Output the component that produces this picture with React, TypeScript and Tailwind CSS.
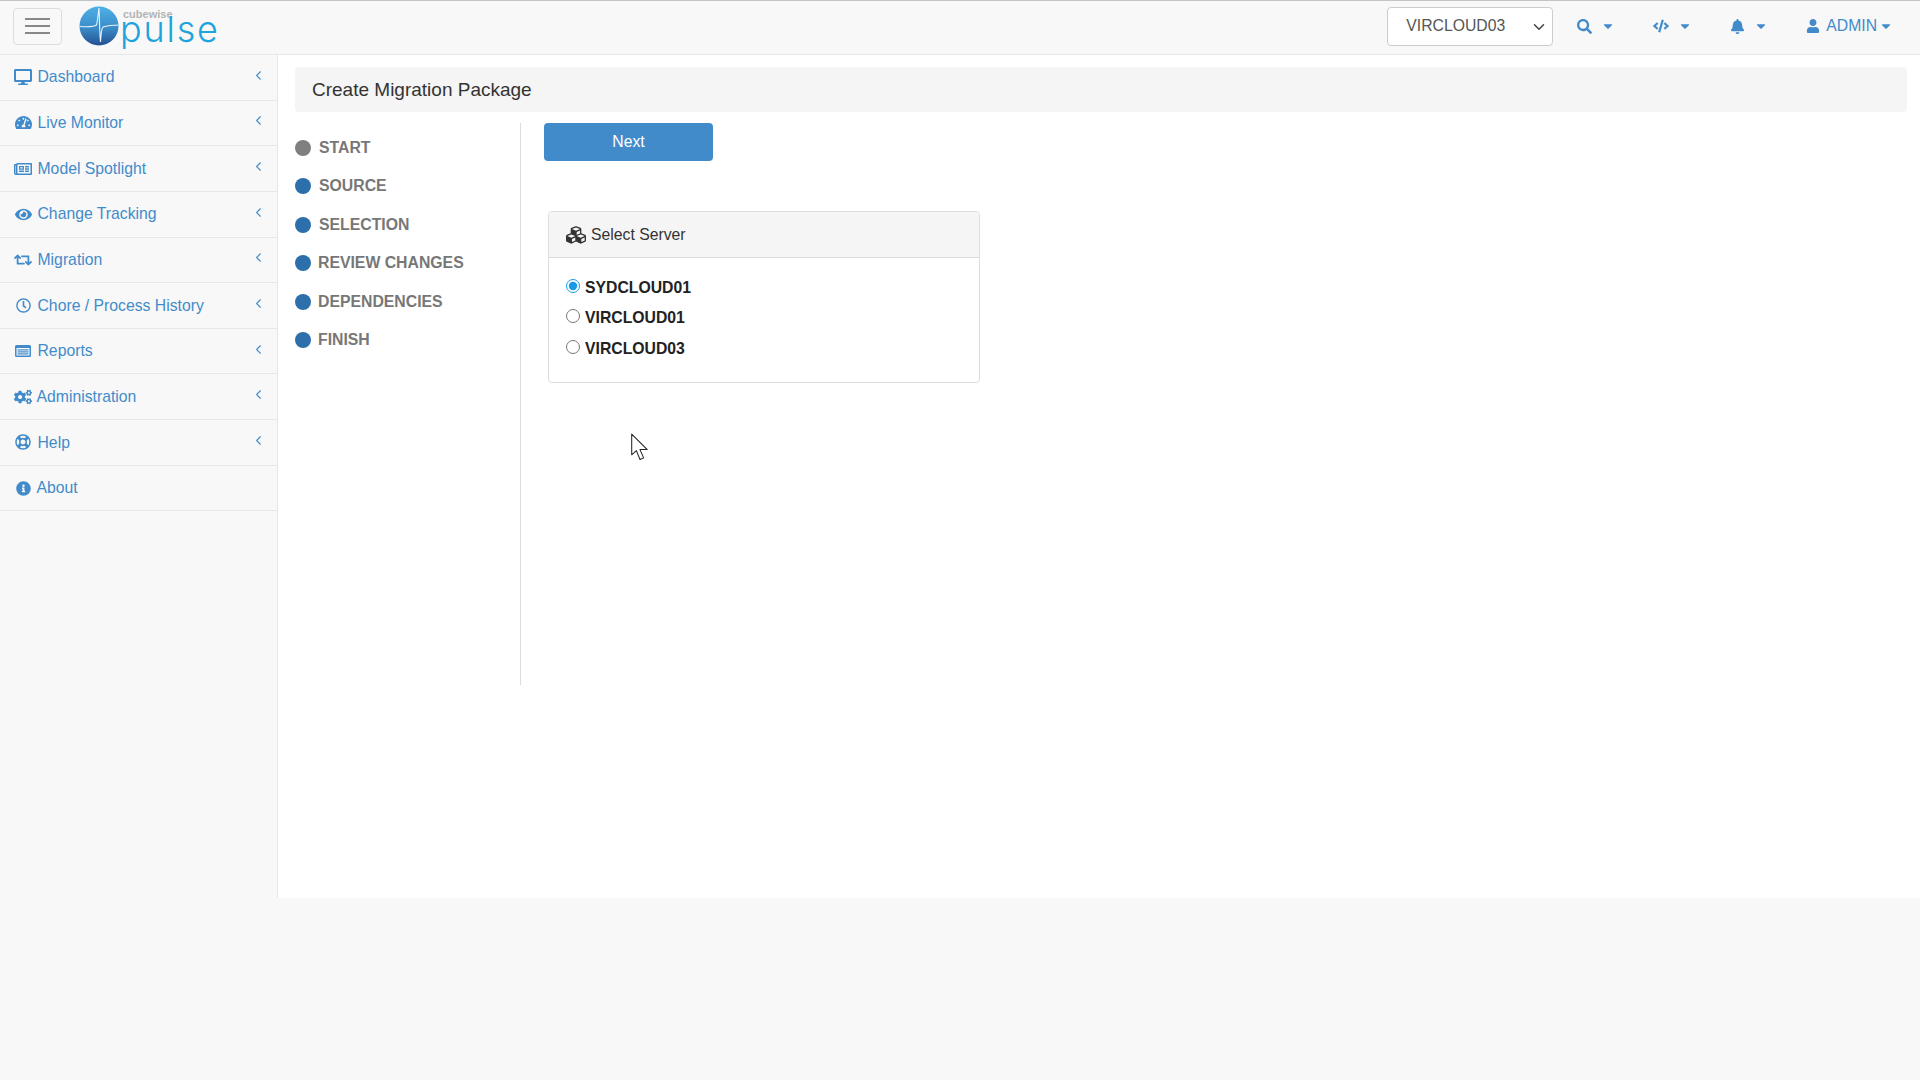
import React from "react";
import { FaDesktop, FaTachometerAlt, FaRegNewspaper, FaEye, FaRetweet, FaRegClock, FaCogs, FaRegLifeRing, FaInfoCircle, FaCubes, FaSearch, FaCode, FaBell, FaUser, FaCaretDown } from "react-icons/fa";
import { ChevronLeft, ChevronDown } from "lucide-react";

function ListAlt({ size }: { size: number }) {
  return (
    <svg width={size} height={size} viewBox="0 0 16 16" fill="currentColor">
      <path d="M1.5 2h13A1.5 1.5 0 0 1 16 3.5v9a1.5 1.5 0 0 1-1.5 1.5h-13A1.5 1.5 0 0 1 0 12.500v-9A1.500 1.500 0 0 1 1.500 2zm0 3v7.500h13V5z" fillRule="evenodd" />
      <rect x="2.500" y="6.300" width="11" height="1.200" />
      <rect x="2.500" y="8.300" width="11" height="1.200" />
      <rect x="2.500" y="10.300" width="11" height="1.200" />
    </svg>
  );
}

const menu: { label: string; Icon: React.ComponentType<any>; w: number; gap: number; chev: boolean }[] = [
  { label: "Dashboard", Icon: FaDesktop, w: 18, gap: 0, chev: true },
  { label: "Live Monitor", Icon: FaTachometerAlt, w: 17, gap: 0, chev: true },
  { label: "Model Spotlight", Icon: FaRegNewspaper, w: 18, gap: 0, chev: true },
  { label: "Change Tracking", Icon: FaEye, w: 17, gap: 0, chev: true },
  { label: "Migration", Icon: FaRetweet, w: 18, gap: 0, chev: true },
  { label: "Chore / Process History", Icon: FaRegClock, w: 15, gap: 0, chev: true },
  { label: "Reports", Icon: ListAlt, w: 16, gap: 0, chev: true },
  { label: "Administration", Icon: FaCogs, w: 18, gap: -1, chev: true },
  { label: "Help", Icon: FaRegLifeRing, w: 16, gap: 0, chev: true },
  { label: "About", Icon: FaInfoCircle, w: 15, gap: -1, chev: false },
];

const steps = [
  { label: "START", color: "bg-[#808080]", gap: "gap-[8px]" },
  { label: "SOURCE", color: "bg-[#2c6fab]", gap: "gap-[8px]" },
  { label: "SELECTION", color: "bg-[#2c6fab]", gap: "gap-[8px]" },
  { label: "REVIEW CHANGES", color: "bg-[#2c6fab]", gap: "gap-[7px]" },
  { label: "DEPENDENCIES", color: "bg-[#2c6fab]", gap: "gap-[7px]" },
  { label: "FINISH", color: "bg-[#2c6fab]", gap: "gap-[7px]" },
];

const servers = ["SYDCLOUD01", "VIRCLOUD01", "VIRCLOUD03"];

function Logo() {
  return (
    <div className="relative ml-[17px] h-[46px] w-[160px]">
      <svg viewBox="0 0 40 40" className="absolute left-0 top-[1px] h-[40px] w-[40px]">
        <defs>
          <linearGradient id="lg" x1="0" y1="0" x2="0" y2="1">
            <stop offset="0" stopColor="#4fb0e6" />
            <stop offset="0.55" stopColor="#3a8cc8" />
            <stop offset="1" stopColor="#234f92" />
          </linearGradient>
        </defs>
        <circle cx="20" cy="20" r="19.5" fill="url(#lg)" />
        <path d="M1 20.5 C10 21 15 21 17.5 19 C18.5 16 19 8 20 2 C20.5 10 20.5 26 21.5 36 C22 28 22.5 22 24 21 C28 19.5 34 19.5 39 19" fill="none" stroke="#e8f3fb" strokeWidth="1.1" />
      </svg>
      <span className="absolute left-[44px] top-[4px] text-[11px] leading-[11px] font-bold text-[#b4b4b4]">cubewise</span>
      <span className="absolute left-[41px] top-[16px] text-[36px] leading-[16px] font-light tracking-[1.8px] text-[#1fa3dc] font-['Inter',sans-serif]">pulse</span>
    </div>
  );
}

function NavIcon({ Icon, className, size }: { Icon: React.ComponentType<any>; className?: string; size: number }) {
  return (
    <span className={`flex items-center gap-[9px] ${className ?? ""}`}>
      <Icon size={size} />
      <FaCaretDown size={14} />
    </span>
  );
}

export default function App() {
  return (
    <div className="flex h-[1080px] w-full flex-col overflow-hidden border-t border-t-[#c4c4c4] bg-[#f8f8f8] font-['Liberation_Sans',Arial,sans-serif] text-[15.75px]">
      <header className="flex h-[54px] shrink-0 items-center border-b border-b-[#e7e7e7] bg-[#f8f8f8]">
        <button className="mb-[3px] ml-[13px] flex h-[37px] w-[49px] flex-col items-center justify-center gap-[5px] rounded border border-[#dddddd]">
          <span className="h-[2px] w-[25px] bg-[#888888]" />
          <span className="h-[2px] w-[25px] bg-[#888888]" />
          <span className="h-[2px] w-[25px] bg-[#888888]" />
        </button>
        <Logo />
        <div className="mb-[3px] ml-auto flex items-center text-[#428bca]">
          <div className="relative mr-[24px]">
            <select className="block h-[39px] w-[166px] appearance-none rounded border border-[#cccccc] bg-white pl-[18px] text-[15.75px] text-[#555555] outline-none" defaultValue="VIRCLOUD03">
              <option>VIRCLOUD03</option>
              <option>SYDCLOUD01</option>
              <option>VIRCLOUD01</option>
            </select>
            <ChevronDown size={18} strokeWidth={2} className="pointer-events-none absolute right-[5px] top-[11px] text-[#444444]" />
          </div>
          <NavIcon Icon={FaSearch} size={15} className="mr-[38px]" />
          <NavIcon Icon={FaCode} size={16} className="mr-[38px]" />
          <NavIcon Icon={FaBell} size={15} className="mr-[38px]" />
          <span className="mr-[27px] flex items-center">
            <FaUser size={14} className="mr-[6px]" />
            ADMIN
            <FaCaretDown size={14} className="ml-[2px]" />
          </span>
        </div>
      </header>

      <div className="flex flex-1">
        <aside className="h-[843px] w-[278px] shrink-0 border-r border-r-[#e7e7e7]">
          {menu.map(({ label, Icon, w, gap, chev }) => (
            <div key={label} className="flex h-[45.65px] items-center border-b border-b-[#e7e7e7] pl-[14px] pr-[11px] text-[#428bca]">
              <span className="flex w-[18px] shrink-0 justify-center">
                <Icon size={w} />
              </span>
              <span className="leading-none" style={{ marginLeft: 5.5 + gap }}>{label}</span>
              {chev && <ChevronLeft size={15} strokeWidth={1.7} className="ml-auto mb-[4px]" />}
            </div>
          ))}
        </aside>

        <main className="h-[843px] flex-1 bg-white pl-[17px] pr-[13px] pt-[12px]">
          <div className="flex h-[45px] items-center rounded bg-[#f5f5f5] pl-[17px] pt-[1px] text-[19px] text-[#333333]">
            Create Migration Package
          </div>
          <div className="mt-[11px] flex h-[562px]">
            <ul className="w-[226px] shrink-0 border-r border-r-[#dddddd] pt-[5.5px]">
              {steps.map((s) => (
                <li key={s.label} className={`flex h-[38.5px] items-center text-[15.8px] font-bold text-[#777777] ${s.gap}`}>
                  <span className={`h-[16px] w-[16px] rounded-full ${s.color}`} />
                  {s.label}
                </li>
              ))}
            </ul>
            <div className="pl-[23px]">
              <button className="h-[38px] w-[169px] rounded bg-[#428bca] text-[15.75px] text-white">Next</button>
              <section className="ml-[4px] mt-[50px] h-[172px] w-[432px] overflow-hidden rounded border border-[#dddddd]">
                <div className="flex h-[46px] items-center gap-[5px] border-b border-b-[#dddddd] bg-[#f5f5f5] pl-[17px] text-[#333333]">
                  <FaCubes size={20} />
                  Select Server
                </div>
                <div className="flex flex-col pl-[17px] pt-[13px]">
                  {servers.map((s, i) => (
                    <label key={s} className={`flex items-center gap-[5px] font-bold text-[#222222] ${i === 0 ? "h-[31px]" : "h-[30.5px]"}`}>
                      <input type="radio" name="srv" defaultChecked={i === 0} className="mb-[2px] h-[14px] w-[14px] accent-[#1a9ae6]" />
                      <span className="mt-[2px]">{s}</span>
                    </label>
                  ))}
                </div>
              </section>
            </div>
          </div>
        </main>
      </div>

      <svg viewBox="0 0 18 27" className="pointer-events-none absolute left-[630px] top-[433px] h-[28px] w-[20px]">
        <path d="M1 1 L1 21 L5.500 17 L9 25.500 L12.500 24 L9 16 L16 16 Z" fill="#ffffff" stroke="#222222" strokeWidth="1" strokeLinejoin="round" />
      </svg>
    </div>
  );
}
